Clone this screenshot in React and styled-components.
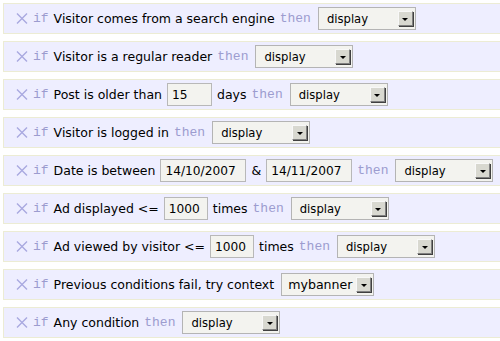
import React from 'react';
import styled, { createGlobalStyle } from 'styled-components';

const GlobalStyle = createGlobalStyle`
  body {
    margin: 0;
    background: #ffffff;
    font-family: "DejaVu Sans", Verdana, sans-serif;
  }
`;

const rules = [
  { parts: ['Visitor comes from a search engine'], then: true, action: 'display' },
  { parts: ['Visitor is a regular reader'], then: true, action: 'display' },
  { parts: ['Post is older than', { value: '15', width: 45 }, 'days'], then: true, action: 'display' },
  { parts: ['Visitor is logged in'], then: true, action: 'display' },
  {
    parts: ['Date is between', { value: '14/10/2007', width: 86 }, '&', { value: '14/11/2007', width: 86 }],
    then: true,
    action: 'display',
  },
  { parts: ['Ad displayed <=', { value: '1000', width: 44 }, 'times'], then: true, action: 'display' },
  { parts: ['Ad viewed by visitor <=', { value: '1000', width: 44 }, 'times'], then: true, action: 'display' },
  { parts: ['Previous conditions fail, try context'], then: false, action: 'mybanner', narrow: true },
  { parts: ['Any condition'], then: true, action: 'display' },
];

const RemoveIcon = () => (
  <svg width="12" height="11" viewBox="0 0 12 11">
    <path d="M1 0.5 L11 10.5 M11 0.5 L1 10.5" stroke="#a9a9e0" strokeWidth="1.4" fill="none" />
  </svg>
);

const App = () => {
  return (
    <>
      <GlobalStyle />
      <List>
        {rules.map((rule, i) => (
          <Row key={i}>
            <Remove>
              <RemoveIcon />
            </Remove>
            <Keyword>if</Keyword>
            {rule.parts.map((part, j) =>
              typeof part === 'string' ? (
                <Label key={j}>{part}</Label>
              ) : (
                <Field key={j} $width={part.width} defaultValue={part.value} />
              )
            )}
            {rule.then && <Keyword>then</Keyword>}
            <Select $width={rule.narrow ? 93 : 98}>
              <SelectText $narrow={rule.narrow}>{rule.action}</SelectText>
              <SelectButton>
                <Arrow />
              </SelectButton>
            </Select>
          </Row>
        ))}
      </List>
    </>
  );
};

const List = styled.div`
  padding: 3px 0 0 3px;
  overflow: hidden;
  display: flex;
  flex-direction: column;
  gap: 7px;
`;

const Row = styled.div`
  height: 29px;
  margin-right: -6px;
  background: #eeeeff;
  border: 1px solid #ececd4;
  display: flex;
  align-items: center;
  gap: 5px;
  padding-left: 12px;
  font-size: 12.5px;
  color: #000;
`;

const Remove = styled.span`
  display: flex;
  width: 12px;
  height: 11px;
`;

const Keyword = styled.span`
  font-family: "Liberation Mono", "Courier New", monospace;
  font-size: 13px;
  color: #9c9ccf;
`;

const Label = styled.span`
  white-space: pre;
`;

const Field = styled.input.attrs({ type: 'text', readOnly: true })`
  box-sizing: border-box;
  width: ${(p) => p.$width}px;
  height: 23px;
  border: 1px solid #b8b8b8;
  background: #f3f3ef;
  font-family: "DejaVu Sans", Verdana, sans-serif;
  font-size: 12.2px;
  color: #000;
  padding: 0 4px;
  margin: 0;
  outline: none;
`;

const Select = styled.div`
  box-sizing: border-box;
  width: ${(p) => p.$width}px;
  height: 23px;
  border: 1px solid #b4b4b4;
  background: #f3f3ef;
  display: flex;
  align-items: center;
  justify-content: space-between;
  padding: 0 2px 0 8px;
  margin-left: 2px;
`;

const SelectText = styled.span`
  font-size: ${(p) => (p.$narrow ? 12.6 : 11.6)}px;
  color: #000;
  margin-left: ${(p) => (p.$narrow ? -2 : 0)}px;
`;

const SelectButton = styled.span`
  box-sizing: border-box;
  width: 15px;
  height: 15px;
  background: #d8d8d0;
  border-top: 1px solid #f8f8f8;
  border-left: 1px solid #f8f8f8;
  border-right: 1px solid #808080;
  border-bottom: 1px solid #808080;
  box-shadow: 1px 1px 0 #404040;
  display: flex;
  align-items: center;
  justify-content: center;
`;

const Arrow = styled.span`
  width: 0;
  height: 0;
  border-left: 3px solid transparent;
  border-right: 3px solid transparent;
  border-top: 3px solid #000;
  margin-top: 1px;
`;

export default App;
